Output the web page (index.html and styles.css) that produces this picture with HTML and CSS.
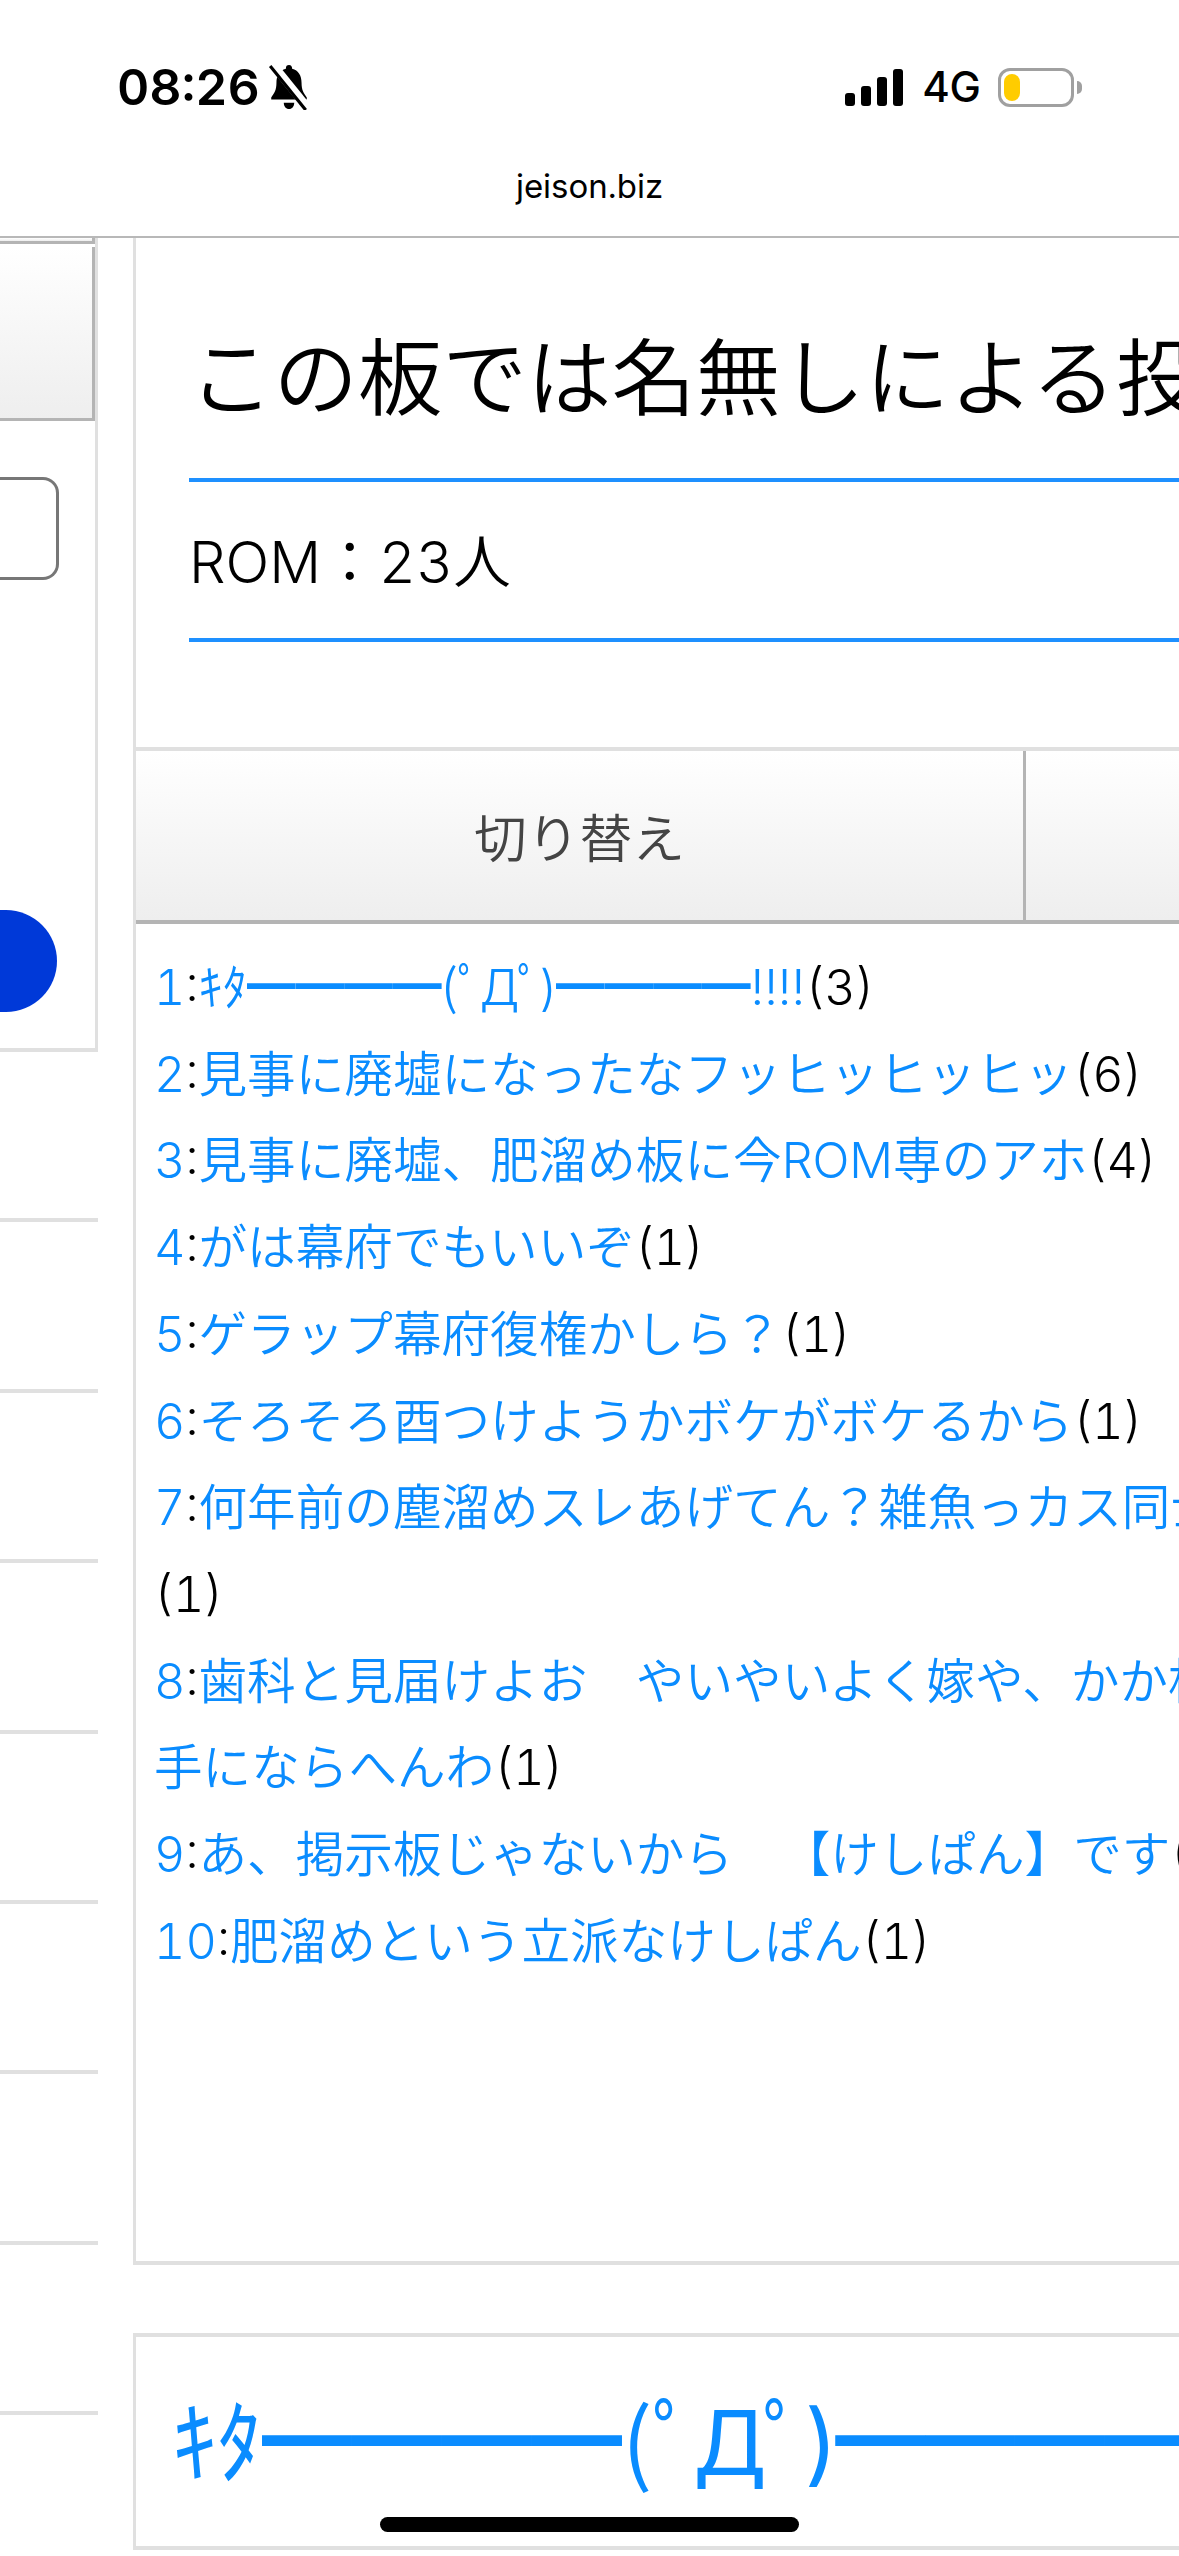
FILE: index.html
```html
<!DOCTYPE html>
<html lang="ja">
<head>
  <meta charset="UTF-8" />
  <meta name="viewport" content="width=device-width, initial-scale=1.0"/>
  <title>jeison.biz</title>
  <link rel="stylesheet" href="styles.css">
</head>
<body>

  <header class="status">
    <div class="status-row">
      <div class="status-left">
        <span class="time">08:26</span>
        <svg class="bell" viewBox="0 0 40 44" width="42" height="46">
          <path d="M20 1c2 0 3 1.500 3 3.500C29 6 32 11 32 18c0 7 2 10 5 14v2H3v-2c3-4 5-7 5-14C8 11 11 6 17 4.500 17 2 18 1 20 1z"/>
          <path d="M15 37h10c0 3.500-2 6-5 6s-5-2.500-5-6z"/>
          <path d="M4 0 38 42" stroke="#fff" stroke-width="8"/>
          <path d="M2 2 36 44" stroke="#000" stroke-width="3"/>
        </svg>
      </div>
      <div class="status-right">
        <div class="signal"><i class="b1"></i><i class="b2"></i><i class="b3"></i><i class="b4"></i></div>
        <span class="net">4G</span>
        <div class="battery"><div class="battery-fill"></div></div>
        <div class="battery-nub"></div>
      </div>
    </div>
    <div class="domain">jeison.biz</div>
  </header>

  <div class="page">
    <aside class="side">
      <div class="side-box">
        <div class="side-btn sliver"></div>
        <div class="side-btn"></div>
        <div class="side-input"></div>
        <div class="side-circle"></div>
      </div>
      <div class="side-rule"></div>
      <div class="side-rule"></div>
      <div class="side-rule"></div>
      <div class="side-rule"></div>
      <div class="side-rule"></div>
      <div class="side-rule"></div>
      <div class="side-rule"></div>
      <div class="side-rule"></div>
    </aside>

    <main class="main">
      <section class="panel">
        <div class="board-head">
          <div class="board-title">この板では名無しによる投稿が</div>
          <div class="board-rom">ROM：23人</div>
        </div>
        <div class="tabs">
          <div class="tab">切り替え</div>
          <div class="tab"></div>
        </div>
        <ul class="threads">
          <li><a>1</a>:<a>ｷﾀ<span class="bars">━━━━</span><span class="face">(ﾟДﾟ)</span><span class="bars">━━━━</span>!!!!</a>(3)</li>
          <li><a>2</a>:<a>見事に廃墟になったなフッヒッヒッヒッ</a>(6)</li>
          <li><a>3</a>:<a>見事に廃墟、肥溜め板に今ROM専のアホ</a>(4)</li>
          <li><a>4</a>:<a>がは幕府でもいいぞ</a>(1)</li>
          <li><a>5</a>:<a>ゲラップ幕府復権かしら？</a>(1)</li>
          <li><a>6</a>:<a>そろそろ酉つけようかボケがボケるから</a>(1)</li>
          <li><a>7</a>:<a>何年前の塵溜めスレあげてん？雑魚っカス同士</a><br>(1)</li>
          <li><a>8</a>:<a>歯科と見届けよお　やいやいよく嫁や、かか相<br>手にならへんわ</a>(1)</li>
          <li><a>9</a>:<a>あ、掲示板じゃないから　【けしぱん】です</a>(1)</li>
          <li><a>10</a>:<a>肥溜めという立派なけしぱん</a>(1)</li>
        </ul>
      </section>

      <section class="panel second">
        <h2 class="thread-title">ｷﾀ<span class="bars">━━━━</span><span class="face">(ﾟДﾟ)</span><span class="bars">━━━━</span>!!!!</h2>
      </section>
    </main>
  </div>

  <div class="home-bar"></div>

</body>
</html>
```

FILE: styles.css
```css
* {
  box-sizing: border-box;
}

html, body {
  margin: 0;
  height: 2556px;
  overflow: hidden;
}

body {
  position: relative;
  width: 1179px;
  background: #fff;
  color: #000;
  font-family: Inter, "Noto Sans CJK JP", sans-serif;
  font-size: 48.600px;
  font-weight: 350;
  font-variant-numeric: tabular-nums;
  text-spacing-trim: space-all;
}

/* status bar + address */
.status {
  height: 238px;
  padding-top: 62px;
  border-bottom: 2px solid #b8b8b8;
}

.status-row {
  display: flex;
  justify-content: space-between;
  align-items: center;
  height: 50px;
  padding: 0 97px 0 117px;
}

.status-left, .status-right {
  display: flex;
  align-items: center;
}

.time {
  font-size: 50px;
  font-weight: 600;
  line-height: 50px;
}

.bell {
  margin-left: 8px;
}

.signal {
  display: flex;
  align-items: flex-end;
  gap: 6px;
  height: 37px;
}

.signal i {
  display: block;
  width: 10px;
  background: #000;
  border-radius: 3px;
}

.signal .b1 { height: 13px; }
.signal .b2 { height: 20px; }
.signal .b3 { height: 29px; }
.signal .b4 { height: 37px; }

.net {
  margin-left: 19px;
  font-size: 42px;
  font-weight: 500;
  line-height: 50px;
}

.battery {
  width: 76px;
  height: 39px;
  margin-left: 17px;
  padding: 3px;
  border: 3px solid #a0a0a0;
  border-radius: 12px;
}

.battery-fill {
  width: 16px;
  height: 100%;
  background: #ffcc00;
  border-radius: 8px;
}

.battery-nub {
  width: 5px;
  height: 13px;
  margin-left: 3px;
  background: #a0a0a0;
  border-radius: 0 6px 6px 0;
}

.domain {
  margin-top: 51px;
  font-size: 33px;
  font-weight: 400;
  line-height: 46px;
  text-align: center;
}

/* page */
.page {
  display: flex;
  align-items: flex-start;
  gap: 35px;
}

.side {
  flex: none;
  width: 98px;
}

.side-box {
  height: 814px;
  border-right: 3px solid #e0e0e0;
  border-bottom: 4px solid #e0e0e0;
}

.side-btn {
  height: 174px;
  margin-top: 3px;
  background: linear-gradient(#fff, #eee);
  border-right: 3px solid #b4b4b4;
  border-bottom: 3px solid #b4b4b4;
}

.side-btn.sliver {
  height: 6px;
  margin-top: 0;
}

.side-input {
  width: 59px;
  height: 103px;
  margin-top: 56px;
  border: 3px solid #777;
  border-left: 0;
  border-radius: 0 16px 16px 0;
}

.side-circle {
  width: 57px;
  height: 102px;
  margin-top: 330px;
  background: #0039d8;
  border-radius: 0 51px 51px 0;
}

.side-rule {
  height: 170.400px;
  border-bottom: 4px solid #e0e0e0;
}

.main {
  flex: none;
  width: 2000px;
}

.panel {
  height: 2027px;
  border-left: 3px solid #e0e0e0;
  border-bottom: 4px solid #e0e0e0;
}

.board-head {
  height: 513px;
  padding: 78px 0 0 54px;
  border-bottom: 4px solid #e0e0e0;
}

.board-title {
  height: 166px;
  margin-left: -1px;
  font-size: 84.500px;
  line-height: 124px;
  border-bottom: 4px solid #1e90ff;
  white-space: nowrap;
}

.board-rom {
  height: 160px;
  margin-left: -1px;
  font-size: 57.600px;
  line-height: 160px;
  border-bottom: 4px solid #1e90ff;
}

.tabs {
  display: flex;
}

.tab {
  flex: none;
  width: 890px;
  height: 173px;
  background: linear-gradient(#fff, #eee);
  border-right: 3px solid #b4b4b4;
  border-bottom: 4px solid #b4b4b4;
  color: #444;
  font-size: 52.800px;
  line-height: 176px;
  text-align: center;
}

.threads {
  margin: 0;
  padding: 17px 0 0 18px;
  list-style: none;
  line-height: 86.700px;
  white-space: nowrap;
}

.threads a {
  color: #0a8cff;
}

.bars {
  font-family: "Noto Sans CJK JP", sans-serif;
  font-weight: 900;
}

.face {
  letter-spacing: -0.045em;
}

.panel.second {
  height: 217px;
  margin-top: 68px;
  border-top: 4px solid #e0e0e0;
}

.thread-title {
  margin: 0;
  padding: 34px 0 0 36px;
  color: #0a8cff;
  font-size: 90px;
  font-weight: 400;
  line-height: 130px;
  white-space: nowrap;
}

.home-bar {
  position: absolute;
  left: 380px;
  top: 2517px;
  width: 419px;
  height: 15px;
  background: #000;
  border-radius: 8px;
}
```
